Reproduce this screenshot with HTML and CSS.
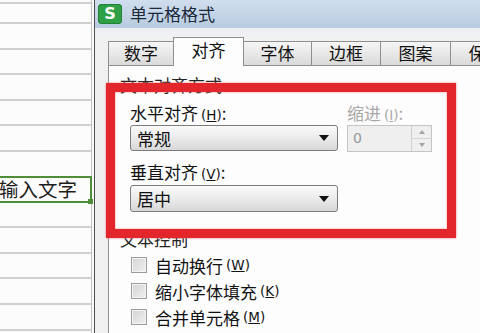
FILE: index.html
```html
<!DOCTYPE html>
<html>
  <head>
    <meta charset="utf-8" />
    <title>单元格格式</title>
    <link rel="stylesheet" href="styles.css">
  </head>

  <body>
    <div class="sheet">
      <div class="row first"></div>
      <div class="row second"></div>
      <div class="row"></div>
      <div class="row"></div>
      <div class="row"></div>
      <div class="row"></div>
      <div class="row"></div>
      <div class="row"></div>
      <div class="row sel"><span class="cell-text">输入文字</span></div>
      <div class="row"></div>
      <div class="row"></div>
      <div class="row"></div>
      <div class="row"></div>
      <div class="row"></div>
    </div>
    <div class="gap"></div>

    <div class="dialog">
      <div class="titlebar">
        <span class="logo">S</span>
        <span class="title">单元格格式</span>
      </div>
      <div class="body">
        <div class="tabs">
          <div class="tab w66">数字</div>
          <div class="tab active">对齐</div>
          <div class="tab w68">字体</div>
          <div class="tab w69">边框</div>
          <div class="tab w70">图案</div>
          <div class="tab w70">保护</div>
        </div>
        <div class="panel">
          <div class="group-title">文本对齐方式</div>
          <div class="align-grid">
            <div class="label">水平对齐<span class="acc">(<u>H</u>)</span>:</div>
            <div class="label off">缩进<span class="acc">(<u>I</u>)</span>:</div>
            <div class="select">常规<span class="caret"></span></div>
            <div class="spin">
              <span class="spin-val">0</span>
              <div class="spin-btns"><i class="up"></i><i class="down"></i></div>
            </div>
            <div class="label v">垂直对齐<span class="acc">(<u>V</u>)</span>:</div>
            <div></div>
            <div class="select v">居中<span class="caret"></span></div>
          </div>
          <div class="group-title ctrl">文本控制</div>
          <div class="checks">
            <div class="check"><span class="box"></span>自动换行<span class="acc">(<u>W</u>)</span></div>
            <div class="check"><span class="box"></span>缩小字体填充<span class="acc">(<u>K</u>)</span></div>
            <div class="check"><span class="box"></span>合并单元格<span class="acc">(<u>M</u>)</span></div>
          </div>
        </div>
      </div>
    </div>

    <!-- red annotation box drawn over the dialog -->
    <div class="mark"></div>
  </body>
</html>
```

FILE: styles.css
```css
* {
  margin: 0;
  padding: 0;
  box-sizing: border-box;
}

body {
  width: 480px;
  height: 333px;
  overflow: hidden;
  display: flex;
  background: #fbfbfb;
  font-family: "Noto Sans CJK SC", sans-serif;
  color: #111;
}

/* spreadsheet column on the left */
.sheet {
  width: 92px;
  flex-shrink: 0;
  border-right: 1px solid #c2c2c2;
  background: #fcfcfc;
}

.row {
  height: 25.6px;
  border-bottom: 2px solid #d0d0d0;
}

.row.first {
  height: 4px;
}

.row.second {
  height: 20px;
}

.row.sel {
  position: relative;
  height: 27px;
  margin-top: -2px;
  margin-right: -1px;
  border: 2px solid #4e8e36;
  border-left: 0;
  display: flex;
  align-items: center;
  overflow: visible;
}

.row.sel::after {
  content: "";
  position: absolute;
  right: -3px;
  bottom: -3px;
  width: 5px;
  height: 5px;
  background: #4e8e36;
}

.cell-text {
  margin-left: -1px;
  font-size: 19.5px;
  line-height: 22px;
  color: #1d1d1d;
  white-space: nowrap;
}

.gap {
  width: 2px;
  flex-shrink: 0;
  background: #fafafa;
}

/* format cells dialog */
.dialog {
  flex: 1;
  min-width: 0;
  height: 333px;
  display: flex;
  flex-direction: column;
  border-left: 1px solid #4e4e4e;
  overflow: hidden;
}

.titlebar {
  height: 28px;
  flex-shrink: 0;
  display: flex;
  align-items: center;
  padding-left: 3px;
  background: linear-gradient(#d0deee, #b8cbe0);
}

.logo {
  width: 24px;
  height: 20px;
  border-radius: 4px;
  background: #2fa046;
  box-shadow: inset 0 0 0 1px #238236;
  color: #fff;
  font-family: "DejaVu Sans", sans-serif;
  font-weight: bold;
  font-size: 16px;
  line-height: 20px;
  text-align: center;
}

.title {
  margin-left: 8px;
  font-size: 17px;
  line-height: 20px;
  color: #1b293a;
  white-space: nowrap;
}

.body {
  flex: 1;
  display: flex;
  flex-direction: column;
  padding: 9px 0 0 13px;
  background: linear-gradient(#eef0f5, #f0f0f0 12px);
}

.tabs {
  height: 28px;
  display: flex;
  align-items: flex-end;
  margin-left: 1px;
}

.tab {
  flex-shrink: 0;
  height: 24px;
  margin-left: -1px;
  border: 1px solid #8f8f8f;
  border-bottom: 0;
  background: linear-gradient(#f6f6f6, #dadada);
  font-size: 17px;
  line-height: 22px;
  text-align: center;
  white-space: nowrap;
}

.w66 { width: 66px; }
.w68 { width: 69px; }
.w69 { width: 70px; }
.w70 { width: 71px; }

.tab.active {
  position: relative;
  z-index: 1;
  width: 71px;
  height: 29px;
  margin-bottom: -1px;
  background: #fdfdfd;
  line-height: 24px;
}

.panel {
  flex: 1;
  background: #fdfdfd;
  border-top: 1px solid #8f8f8f;
  border-left: 1px solid #8f8f8f;
  padding-left: 11px;
}

.group-title {
  margin-top: 10px;
  font-size: 17px;
  line-height: 18px;
  color: #222;
}

.group-title.ctrl {
  margin-top: 18px;
}

.align-grid {
  display: grid;
  grid-template-columns: 208px 85px;
  column-gap: 9px;
  margin: 10px 0 0 10px;
}

.label {
  font-size: 17px;
  line-height: 18px;
  white-space: nowrap;
}

.label.v {
  margin-top: 11px;
}

.label.off {
  color: #a8a8a8;
}

.acc {
  font-family: "DejaVu Sans", sans-serif;
  font-size: 13.5px;
  margin-left: 3px;
}

.select {
  height: 26px;
  margin-top: 1px;
  display: flex;
  align-items: center;
  justify-content: space-between;
  padding: 0 8px 0 6px;
  border: 1px solid #7c7c7c;
  border-radius: 3px;
  background: linear-gradient(#fbfbfb, #ececec 45%, #d8d8d8);
  font-size: 17px;
}

.select.v {
  height: 27px;
  margin-top: 2px;
}

.caret {
  width: 0;
  height: 0;
  border-left: 5px solid transparent;
  border-right: 5px solid transparent;
  border-top: 6px solid #111;
}

.spin {
  height: 27px;
  margin-top: 1px;
  display: flex;
  border: 1px solid #c4c4c4;
  background: #efefef;
}

.spin-val {
  flex: 1;
  padding-left: 5px;
  font-family: "DejaVu Sans", sans-serif;
  font-size: 14px;
  line-height: 25px;
  color: #999;
}

.spin-btns {
  width: 20px;
  display: flex;
  flex-direction: column;
  border-left: 1px solid #d0d0d0;
}

.spin-btns i {
  flex: 1;
  display: flex;
  align-items: center;
  justify-content: center;
}

.spin-btns i + i {
  border-top: 1px solid #d6d6d6;
}

.spin-btns .up::before,
.spin-btns .down::before {
  content: "";
  border-left: 3px solid transparent;
  border-right: 3px solid transparent;
}

.spin-btns .up::before {
  border-bottom: 4px solid #a4a4a4;
}

.spin-btns .down::before {
  border-top: 4px solid #a4a4a4;
}

.checks {
  margin-top: 4px;
  padding-left: 11px;
}

.check {
  height: 26px;
  display: flex;
  align-items: center;
  font-size: 17px;
  white-space: nowrap;
}

.box {
  width: 16px;
  height: 16px;
  margin-right: 8px;
  border: 1px solid #9d9d9d;
  box-shadow: inset 0 0 0 1px #f4f4f4;
  background: linear-gradient(135deg, #d4d4d4, #f0f0f0);
}

.mark {
  position: absolute;
  left: 106px;
  top: 83px;
  width: 350px;
  height: 155px;
  border: 9px solid #e3262c;
  box-shadow: 0 0 2px #f07a7a, inset 0 0 2px #f07a7a;
}
```
